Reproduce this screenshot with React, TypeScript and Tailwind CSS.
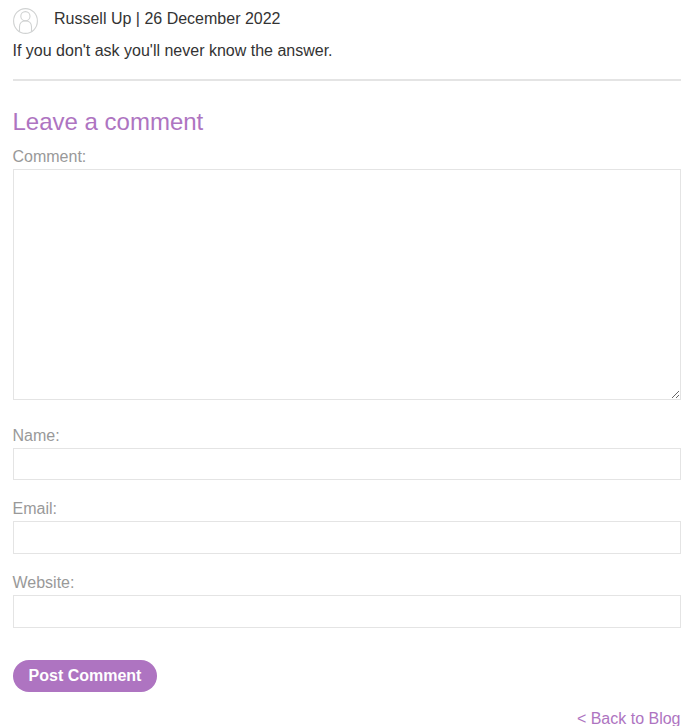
import React from "react";

function Avatar() {
  return (
    <svg className="mt-[8px] h-[26px] w-[25px] shrink-0" viewBox="0 0 25 26" fill="none" stroke="#d0d2d2" strokeWidth="1.1">
      <ellipse cx="12.5" cy="13" rx="11.9" ry="12.4" />
      <circle cx="12.4" cy="8.2" r="4.6" />
      <path d="M6.5 23.8V18.8C6.5 15.2 9 12.9 12.5 12.9S18.5 15.2 18.5 18.8V23.8" />
    </svg>
  );
}

function Field({ label, id, className }: { label: string; id: string; className: string }) {
  return (
    <div className={className}>
      <label htmlFor={id} className="-ml-[0.5px] block h-6 text-[#999999]">
        {label}
      </label>
      <input id={id} className="block h-full w-full border border-[#e4e4e4] bg-white px-2 outline-none" />
    </div>
  );
}

export default function App() {
  return (
    <main className="h-[726px] overflow-hidden bg-white pl-[13px] pr-[18px] font-['Liberation_Sans',Arial,sans-serif] text-base leading-6 text-[#333333]">
      <article className="h-[81px] border-b-2 border-[#e4e4e4]">
        <header className="flex h-[39px]">
          <Avatar />
          <span className="ml-[16px] mt-[7px]">Russell Up | 26 December 2022</span>
        </header>
        <p className="-ml-[0.5px]">If you don't ask you'll never know the answer.</p>
      </article>
      <form onSubmit={(e) => e.preventDefault()}>
        <h2 className="-ml-[0.5px] mt-[25px] h-[39px] text-2xl leading-8 text-[#ae74c1]">Leave a comment</h2>
        <label htmlFor="comment" className="-ml-[0.5px] block h-6 text-[#999999]">
          Comment:
        </label>
        <textarea id="comment" className="block h-[231px] w-full resize border border-[#e4e4e4] bg-white p-2 outline-none" />
        <Field label="Name:" id="name" className="mt-6 grid h-14 grid-rows-[24px_32px]" />
        <Field label="Email:" id="email" className="mt-[17px] grid h-[57px] grid-rows-[24px_33px]" />
        <Field label="Website:" id="website" className="mt-[17px] grid h-[57px] grid-rows-[24px_33px]" />
        <button className="mt-8 block h-8 w-36 rounded-full bg-[#ae74c1] text-center font-bold leading-8 text-white">
          Post Comment
        </button>
      </form>
      <div className="mt-[15px] pr-[0.5px] text-right text-[#ae74c1]">
        <a href="#">&lt; Back to Blog</a>
      </div>
    </main>
  );
}
